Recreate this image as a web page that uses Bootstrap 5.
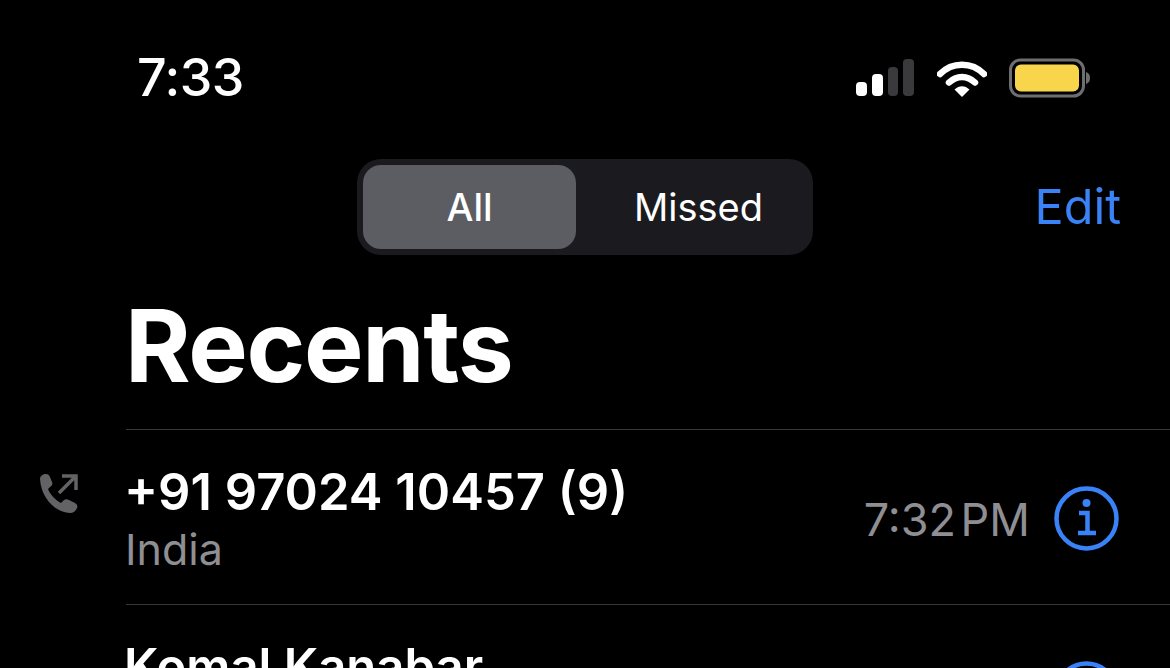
<!DOCTYPE html>
<html lang="en">
<head>
    <meta charset="UTF-8">
    <meta name="viewport" content="width=device-width, initial-scale=1.0">
    <title>Recents</title>
    <link rel="stylesheet" href="https://cdn.jsdelivr.net/npm/bootstrap@5.3.0/dist/css/bootstrap.min.css">
    <style>
        html, body {
            height: 100%;
            overflow: hidden;
            background: #000;
        }
        body {
            font-family: Inter, "Liberation Sans", sans-serif;
            color: #fff;
        }
        .status-row {
            height: 159px;
            padding: 50px 80px 0 137px;
        }
        .clock {
            font-size: 52px;
            font-weight: 500;
            line-height: 56px;
            letter-spacing: -.5px;
        }
        .status-icons {
            margin-top: 8px;
            gap: 22.5px;
        }
        .head-row {
            height: 96px;
            padding-left: 357px;
            padding-right: 49px;
        }
        .segments {
            width: 456px;
            height: 96px;
            padding: 6px;
            background: #1b1b1f;
            border-radius: 24px;
        }
        .seg-item {
            flex: 1 1 0;
            font-size: 38px;
            line-height: 85px;
            text-align: center;
            border-radius: 18px;
            padding-left: 14px;
        }
        .seg-active {
            flex: 0 0 213px;
            background: #5c5c63;
            font-weight: 500;
            padding-left: 0;
        }
        .edit-link {
            color: #3a82f7;
            font-size: 48.5px;
            line-height: 96px;
            text-decoration: none;
        }
        .page-title {
            font-size: 100px;
            font-weight: 700;
            line-height: 116px;
            letter-spacing: -1.3px;
            margin: 0;
            height: 174px;
            padding: 33px 0 0 125px;
        }
        .call-row {
            position: relative;
            height: 175px;
            margin-left: 126px;
            padding-right: 51px;
            border-top: 1px solid #38383a;
        }
        .call-dir {
            position: absolute;
            left: -87px;
            top: 43px;
        }
        .call-name {
            font-size: 50.7px;
            font-weight: 600;
            line-height: 60px;
            margin-top: 32px;
            margin-left: -2px;
        }
        .name-tight {
            font-size: 49px;
        }
        .call-place {
            font-size: 43px;
            line-height: 50px;
            color: #8e8e93;
            margin-top: 2px;
            margin-left: -1px;
        }
        .call-end {
            margin-top: 54px;
        }
        .call-end-next {
            margin-top: 56px;
        }
        .call-time {
            font-size: 45px;
            color: #8e8e93;
            margin-right: 24px;
            margin-top: 2px;
            word-spacing: -8px;
        }
    </style>
</head>
<body>
    <!-- Status bar -->
    <div class="status-row d-flex justify-content-between align-items-start">
        <div class="clock">7:33</div>
        <div class="status-icons d-flex align-items-center">
            <svg width="58" height="40" viewBox="0 0 58 40">
                <rect x="0" y="24" width="11" height="14" rx="4" fill="#fff"/>
                <rect x="16" y="16" width="11" height="22" rx="4" fill="#fff"/>
                <rect x="32" y="9" width="10" height="29" rx="4" fill="#3a3a3c"/>
                <rect x="47" y="1" width="11" height="37" rx="4" fill="#3a3a3c"/>
            </svg>
            <svg width="50" height="40" viewBox="0 0 50 40">
                <path d="M3 16C15 3.500 35 3.500 47 16" fill="none" stroke="#fff" stroke-width="6.500" stroke-linecap="round"/>
                <path d="M12 24.500C19.500 17 30.500 17 38 24.500" fill="none" stroke="#fff" stroke-width="6.500" stroke-linecap="round"/>
                <path d="M17.500 31.500C22 27 28 27 32.500 31.500L25 39Z" fill="#fff"/>
            </svg>
            <svg width="81" height="40" viewBox="0 0 81 40">
                <rect x="1.500" y="2" width="73" height="36" rx="10" fill="none" stroke="#6e6e70" stroke-width="3"/>
                <rect x="6" y="6.500" width="64" height="27" rx="6" fill="#f8d54a"/>
                <path d="M77 14C80 15 81 17 81 20C81 23 80 25 77 26Z" fill="#6e6e70"/>
            </svg>
        </div>
    </div>

    <!-- Filter and edit -->
    <div class="head-row d-flex justify-content-between align-items-start">
        <div class="segments d-flex">
            <div class="seg-item seg-active">All</div>
            <div class="seg-item">Missed</div>
        </div>
        <a class="edit-link" href="#">Edit</a>
    </div>

    <h1 class="page-title">Recents</h1>

    <!-- Call list -->
    <div class="call-row d-flex justify-content-between align-items-start">
        <svg class="call-dir" width="40" height="40" viewBox="0 0 40 40">
            <path d="M1 6C1 3 4 1 7 1C9 1 10 2 11 4L13 9C14 11 13 13 11 14L9 16C11 21 16 27 22 30L24 28C26 26 28 26 30 27L36 30C38 31 39 33 38 35C37 38 34 40 31 40C15 39 2 24 1 6Z" fill="#636366"/>
            <path d="M20 20L36 4M23 3H37V17" fill="none" stroke="#636366" stroke-width="3.500"/>
        </svg>
        <div>
            <div class="call-name">+91 97024 10457 (9)</div>
            <div class="call-place">India</div>
        </div>
        <div class="call-end d-flex align-items-center">
            <div class="call-time">7:32 PM</div>
            <svg width="65" height="65" viewBox="0 0 65 65">
                <circle cx="32.500" cy="32.500" r="30" fill="none" stroke="#3a82f7" stroke-width="4.500"/>
                <circle cx="32.500" cy="17" r="4" fill="#3a82f7"/>
                <path d="M25 27H33.500V46M24 47H42" fill="none" stroke="#3a82f7" stroke-width="4.500"/>
            </svg>
        </div>
    </div>
    <div class="call-row d-flex justify-content-between align-items-start">
        <div>
            <div class="call-name name-tight">Komal Kanabar</div>
        </div>
        <div class="call-end-next d-flex align-items-center">
            <svg width="65" height="65" viewBox="0 0 65 65">
                <circle cx="32.500" cy="32.500" r="30" fill="none" stroke="#3a82f7" stroke-width="4.500"/>
            </svg>
        </div>
    </div>

    <script src="https://cdn.jsdelivr.net/npm/bootstrap@5.3.0/dist/js/bootstrap.bundle.min.js"></script>
</body>
</html>
